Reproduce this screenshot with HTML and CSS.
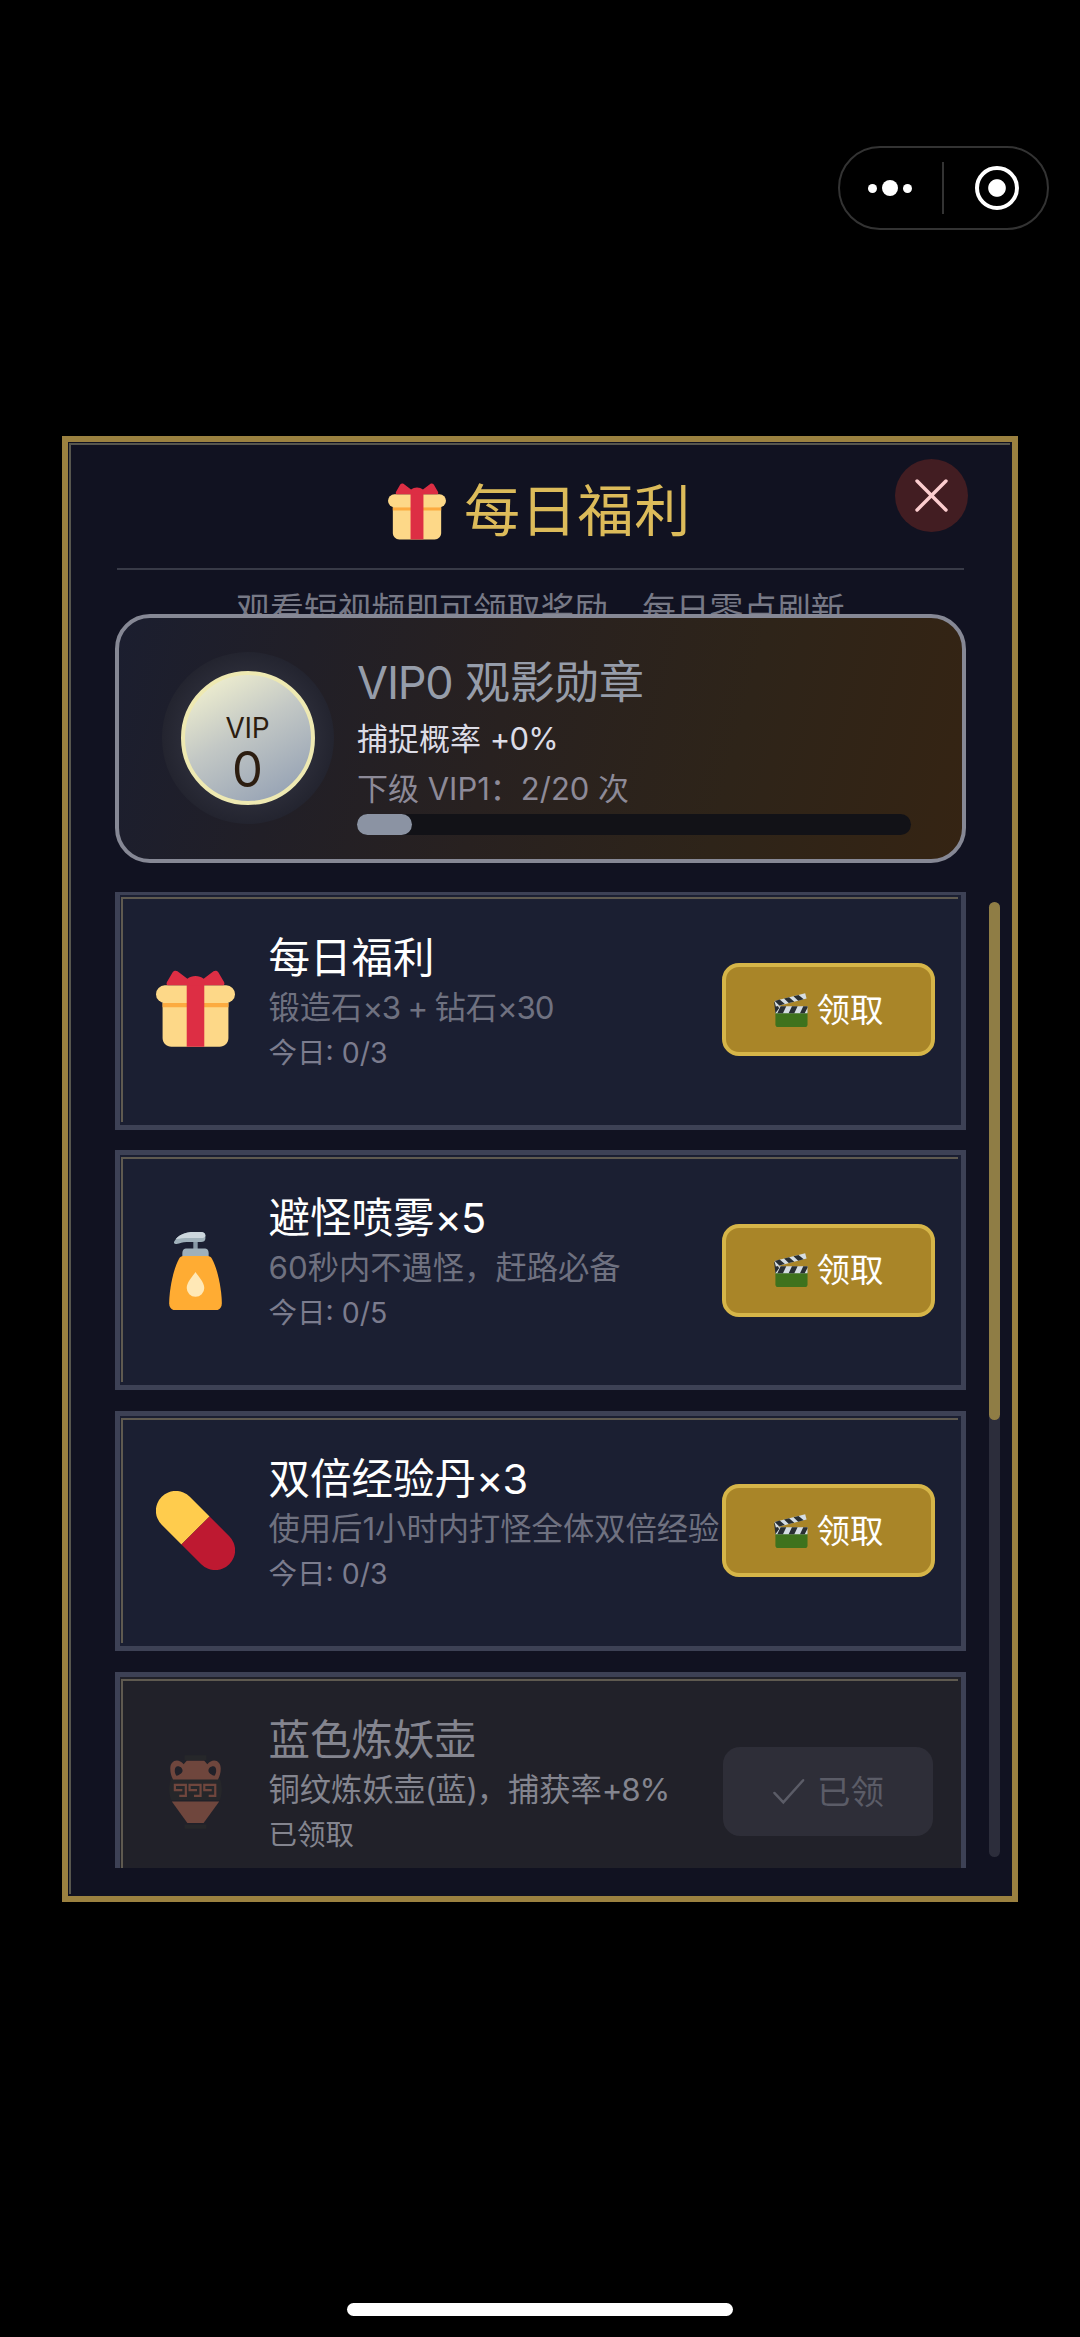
FILE: index.html
```html
<!DOCTYPE html>
<html lang="zh-CN">
<head>
<meta charset="utf-8">
<title>每日福利</title>
<link rel="stylesheet" href="styles.css">
</head>
<body>
<svg class="defs" width="0" height="0" aria-hidden="true">
  <symbol id="gift" viewBox="0 0 36 36">
    <path fill="#fdd888" d="M33 31c0 2.2-1.8 4-4 4H7c-2.2 0-4-1.800-4-4V14h30z"/>
    <path fill="#fcab40" d="M3 15h30v2H3z"/>
    <path fill="#fdd888" d="M36 11a4 4 0 0 1-4 4H4a4 4 0 0 1 0-8h28a4 4 0 0 1 4 4z"/>
    <path fill="#dd2e44" d="M14 35V6h8v29z"/>
    <path fill="#dd2e44" d="M5.500 7C4.800 7 4.600 6.300 5 5.500L7.600 1C8.200.2 9 .1 9.800.6L14.300 4c2-1.700 5.400-1.700 7.400 0L26.200.6c.8-.5 1.600-.4 2.200.4L31 5.500c.4.800.2 1.500-.5 1.500z"/>
  </symbol>
  <symbol id="soap" viewBox="0 0 36 36">
    <path fill="#8899a6" d="M17 4h2v5h-2z"/>
    <path fill="#9fb0ba" d="M12 10.400C12 8.500 12.800 8 14 8h8c1.200 0 2 .5 2 2.400V12H12z"/>
    <path fill="#9fb0ba" d="M8.300 4.800C10 1.800 13.500.5 17 .5h3.500c1.200 0 2 .6 2 1.500v1.500c0 .9-.8 1.500-2 1.500H14c-2 0-3 .6-4.700.9-1 .1-1.300-.4-1-1.100z"/>
    <path fill="#ccd6dd" d="M9 3.600C11 1.500 13.900.5 17 .5h3.500c1.200 0 2 .6 2 1.500 0 .8-.8 1.200-2 1.200H15c-2.500 0-4 .3-6 .4z"/>
    <path fill="#ffac33" d="M10.500 12.600c.5-.8 1-1.200 2-1.200h11c1 0 1.500.4 2 1.200C28.500 18 30 28 30 33c0 1.800-1.200 3.200-3 3.200H9c-1.800 0-3-1.400-3-3.200 0-5 1.500-15 4.500-20.400z"/>
    <path fill="#ffe8b6" d="M18 18.700c1.300 2 4 4.700 4 7.300a4 4 0 0 1-8 0c0-2.600 2.700-5.300 4-7.300z"/>
  </symbol>
  <symbol id="pill" viewBox="0 0 36 36">
    <path fill="#ffcc4d" d="M11.600 24.400 2.600 15.400A9 9 0 0 1 15.400 2.600l9 9z"/>
    <path fill="#be1931" d="M24.400 11.600l9 9A9 9 0 0 1 20.600 33.400l-9-9z"/>
  </symbol>
  <symbol id="amphora" viewBox="0 0 36 36">
    <path fill="#26272a" d="M13 1.500h10v2.300H13zM13 33h10v2H13z"/>
    <path fill="#26272a" d="M7 12h22c1.300 3 1.300 7 0 10H7c-1.300-3-1.300-7 0-10z"/>
    <path fill="#6f463d" fill-rule="evenodd" d="M14 4h8l1.400 1.600C26 2.500 29.500 4 29.500 7.500c0 2-.5 3.700-1.300 5H7.800c-.8-1.300-1.300-3-1.300-5C6.500 4 10 2.500 12.600 5.600zM9.300 10.800c-1.200-1.600-.9-4.300.6-4.300 1.300 0 2.200 1 2.200 2 0 .9-1.200 1.900-2.800 2.300zm17.400 0c1.200-1.600.9-4.300-.6-4.300-1.300 0-2.200 1-2.200 2 0 .9 1.200 1.900 2.800 2.300z"/>
    <path fill="#6f463d" d="M7.200 22.500h21.600L21.700 32.400h-7.400z"/>
    <path fill="none" stroke="#6f463d" d="M8.600 15h5v5h-3M8.600 14.500v2.900H12M15.300 15h5v5h-3M15.300 14.500v2.900H18.700M22 15h5v5h-3M22 14.500v2.900H25.400"/>
  </symbol>
  <symbol id="clapper" viewBox="0 0 36 36">
    <path fill="#3e721d" d="M1.500 20h34v13a3 3 0 0 1-3 3h-28a3 3 0 0 1-3-3z"/>
    <path fill="#d5dde3" d="M2 14h33.500v7.500H1.500z"/>
    <path fill="#292f33" d="M7 14h6l-3.500 7.500h-6zM19 14h6l-3.500 7.500h-6zM31 14h4.500v1.500l-3 6h-5zM0 9l5.500 7-4 5.500z"/>
    <path fill="#d5dde3" d="M.5 8.500 33 .2l1.500 5.600L2 14.200z"/>
    <path fill="#292f33" d="M6 7l5.500 4.700L5.600 13.300.8 8.400zM16 4.500l5.500 4.700-5.900 1.500-5-4.800zM26 2l5.500 4.600-5.900 1.500-5-4.700z"/>
  </symbol>
</svg>

<nav class="capsule">
  <span class="dots"><i></i><i></i><i></i></span>
  <span class="split"></span>
  <span class="target"></span>
</nav>

<main class="panel">
  <button class="close" aria-label="关闭"><svg viewBox="0 0 32 32"><path d="M2 2 30 30M30 2 2 30"/></svg></button>
  <header class="head"><svg class="head-gift"><use href="#gift"/></svg><h1>每日福利</h1></header>
  <p class="hint">观看短视频即可领取奖励，每日零点刷新</p>

  <section class="vip">
    <div class="halo"><div class="medal"><span>VIP</span><b>0</b></div></div>
    <div class="vip-info">
      <h2><span class="n">VIP0</span> 观影勋章</h2>
      <p class="rate">捕捉概率 <span class="n">+0%</span></p>
      <p class="next">下级 VIP1：2/20 次</p>
      <div class="bar"><div class="fill" style="width:10%"></div></div>
    </div>
  </section>

  <div class="scroll">
    <div class="list">
      <article class="item">
        <svg class="icon"><use href="#gift"/></svg>
        <div class="info"><h3>每日福利</h3><p class="desc">锻造石<span class="n">×3 + </span>钻石<span class="n">×30</span></p><p class="count">今日: 0/3</p></div>
        <button class="claim"><svg><use href="#clapper"/></svg>领取</button>
      </article>
      <article class="item">
        <svg class="icon"><use href="#soap"/></svg>
        <div class="info"><h3>避怪喷雾<span class="n">×5</span></h3><p class="desc">60秒内不遇怪，赶路必备</p><p class="count">今日: 0/5</p></div>
        <button class="claim"><svg><use href="#clapper"/></svg>领取</button>
      </article>
      <article class="item">
        <svg class="icon"><use href="#pill"/></svg>
        <div class="info"><h3>双倍经验丹<span class="n">×3</span></h3><p class="desc">使用后1小时内打怪全体双倍经验</p><p class="count">今日: 0/3</p></div>
        <button class="claim"><svg><use href="#clapper"/></svg>领取</button>
      </article>
      <article class="item done">
        <svg class="icon"><use href="#amphora"/></svg>
        <div class="info"><h3>蓝色炼妖壶</h3><p class="desc">铜纹炼妖壶<span class="n">(</span>蓝<span class="n">)</span>，捕获率<span class="n">+8%</span></p><p class="count">已领取</p></div>
        <button class="claim"><svg class="tick" viewBox="0 0 36 36"><path d="M2.500 19 12 29 33 5.500"/></svg>已领</button>
      </article>
    </div>
    <div class="track"><div class="thumb"></div></div>
  </div>
</main>
<div class="home"></div>
</body>
</html>
```
FILE: styles.css
```css
* { box-sizing: border-box; margin: 0; padding: 0; }
body {
  width: 1080px; height: 2337px; overflow: hidden; background: #000;
  display: flex; flex-direction: column;
  font-family: Inter, "Noto Sans CJK SC", sans-serif; font-weight: 400;
}
.defs { position: absolute; }
h1, h2, h3, b { font-weight: 400; }
p, h1, h2, h3 { white-space: nowrap; }
button { border: 0; font: inherit; }
.n { letter-spacing: -.026em; }

.capsule {
  align-self: flex-end; flex: none; width: 211px; height: 84px; margin: 146px 31px 0 0;
  border: 2px solid #333; border-radius: 42px;
  display: flex; align-items: center; padding: 0 28px;
}
.dots { display: flex; align-items: center; gap: 5px; width: 44px; }
.dots i { width: 9px; height: 9px; border-radius: 50%; background: #fff; }
.dots i:nth-child(2) { width: 16px; height: 16px; }
.split { width: 2px; height: 52px; margin: 0 31px 0 30px; background: #333; }
.target { flex: none; width: 44px; height: 44px; border: 4.500px solid #fff; border-radius: 50%; background: radial-gradient(circle, #fff 8.300px, transparent 9.300px); }

.panel {
  position: relative; flex: none; width: 956px; height: 1466px; margin: 206px 0 0 62px;
  border: 6px solid #9b8140; background: #111221; padding: 0 12px 0 47px;
}
.panel::before {
  content: ""; position: absolute; left: 1px; top: 1px; right: 2px; bottom: 2px;
  border: solid #57564e; border-width: 2px 0 0 2px;
}
.close {
  position: absolute; left: 827px; top: 17px; width: 73px; height: 73px; border-radius: 50%;
  background: #421d22; display: flex; align-items: center; justify-content: center;
}
.close svg { width: 33px; height: 33px; fill: none; stroke: #fccdcf; stroke-width: 3.400; stroke-linecap: round; }
.head {
  display: flex; align-items: center; justify-content: center; gap: 18px;
  width: 847px; height: 128px; margin-left: 2px; padding: 11px 2px 0 0; border-bottom: 2px solid #383a47;
}
.head-gift { width: 58px; height: 58px; margin-top: 2px; }
.head h1 { font-size: 56px; line-height: 70px; color: #dcbb5a; letter-spacing: .8px; }
.hint {
  width: 851px; height: 44px; overflow: hidden; padding-top: 18px; text-align: center;
  font-size: 33.800px; line-height: 44px; color: #777986;
}

.vip {
  width: 851px; height: 249px; border: 4px solid #868895; border-radius: 35px;
  background: linear-gradient(105deg, #1b1e2f 0%, #211f27 22%, #282120 45%, #2e2419 72%, #352413 100%);
  display: flex; align-items: center;
}
.halo {
  flex: none; width: 172px; height: 172px; margin: -2px 0 0 42.500px; border-radius: 50%;
  background: radial-gradient(circle closest-side, #2b2c38 75%, #23242f 100%);
  display: flex; align-items: center; justify-content: center;
}
.medal {
  width: 134px; height: 134px; border-radius: 50%; border: 4px solid #eee9b2;
  background: linear-gradient(150deg, #f3f2d0 5%, #c3c8c5 45%, #929fb3 95%);
  display: flex; flex-direction: column; align-items: center; color: #2c1d10; padding-top: 36px;
}
.medal span { font-size: 28px; line-height: 34px; letter-spacing: -.3px; }
.medal b { font-size: 49px; line-height: 50px; }
.vip-info { margin-left: 23.500px; width: 554px; padding-top: 24px; align-self: flex-start; }
.vip-info h2 { font-size: 45px; line-height: 82px; height: 82px; color: #969daa; letter-spacing: -.3px; }
.vip-info p { font-size: 31px; line-height: 50px; height: 50px; }
.vip-info .rate { margin-top: -10px; color: #dcdce6; }
.next { color: #8d8a98; }
.bar { height: 21px; border-radius: 11px; background: #121217; }
.fill { height: 100%; border-radius: 11px; background: #8b93a3; }

.scroll { display: flex; justify-content: space-between; margin-top: 29px; }
.list { width: 851px; height: 976px; overflow: hidden; display: flex; flex-direction: column; gap: 20.700px; }
.item {
  position: relative; flex: none; height: 240px; border: 5px solid #3d4155; background: #1b1f32;
  display: flex; align-items: center; padding: 0 26px 0 35.500px;
}
.item:first-child { margin-top: -2.500px; }
.item::before {
  content: ""; position: absolute; left: 1px; top: 2px; right: 3px; bottom: 3px;
  border: solid #5f5a50; border-width: 2px 0 0 2px;
}
.icon { flex: none; width: 79px; height: 79px; }
.info { flex: 1; min-width: 0; margin-left: 34px; align-self: flex-start; padding-top: 36px; }
.info h3 { font-size: 41.500px; line-height: 54px; height: 54px; color: #fff; }
.desc { font-size: 31.300px; line-height: 46px; height: 46px; color: #6f7180; }
.desc .n { letter-spacing: -.04em; }
.count { font-size: 28.500px; line-height: 44px; height: 44px; color: #7b7c8e; }
.claim {
  position: relative; flex: none; width: 213px; height: 93px; border: 4px solid #d6b548; border-radius: 17px;
  background: #a98528; color: #fff; font-size: 33.500px; line-height: 44px;
  display: flex; align-items: center; justify-content: center; gap: 9px;
}
.claim svg { width: 34px; height: 34px; }
.done { background: #212129; }
.done h3, .done .desc, .done .count { color: #84858f; }
.done .claim { width: 210px; height: 89px; margin-right: 2px; border: 0; background: #2e2e38; color: #5b5c67; gap: 11px; }
.tick { fill: none; stroke: #5b5c67; stroke-width: 2.600; stroke-linecap: round; }
.track { width: 11px; height: 955px; margin-top: 10px; border-radius: 6px; background: #2c2d3b; }
.thumb { height: 518px; border-radius: 6px; background: #8f7d45; }

.home { flex: none; width: 386px; height: 13px; margin: 401px auto 0; border-radius: 7px; background: #fff; }
```
